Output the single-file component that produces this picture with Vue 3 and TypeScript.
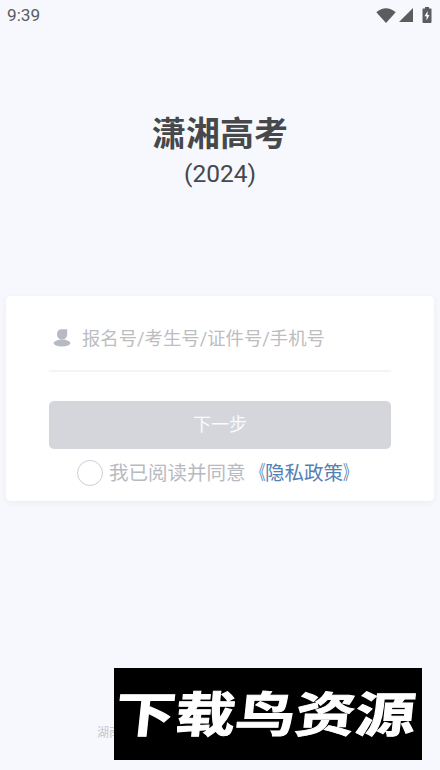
<script setup lang="ts">
import { ref } from 'vue'

const account = ref('')
const agreed = ref(false)
</script>

<template>
  <main class="screen">
    <header class="status">
      <span class="time">9:39</span>
      <div class="indicators">
        <svg class="wifi" viewBox="0 0 20 15"><path d="M.3 4.2Q10-3.8 19.7 4.2L10 15Z" /></svg>
        <svg class="signal" viewBox="0 0 14 14"><path d="M14 0V14H0Z" /></svg>
        <svg class="battery" viewBox="0 0 10 16">
          <path d="M3 0H7V1.5H9Q9.5 1.5 9.5 2.5V15Q9.5 16 8.5 16H1.5Q.5 16 .5 15V2.5Q.5 1.5 1 1.5H3Z" />
          <path class="bolt" d="M5.6 4L2.5 9.3H4.5V13.5L7.5 8H5.6Z" />
        </svg>
      </div>
    </header>

    <div class="heading">
      <h1>潇湘高考</h1>
      <p>(2024)</p>
    </div>

    <section class="card">
      <label class="field">
        <svg class="user" viewBox="0 0 18 18">
          <path d="M4 5.3Q4 .3 9 .3H14.2V5.3C14.2 8.5 12 10.6 9.1 10.6S4 8.5 4 5.3Z" />
          <ellipse cx="9" cy="14.1" rx="8.5" ry="3.5" />
        </svg>
        <input v-model="account" type="text" placeholder="报名号/考生号/证件号/手机号" />
      </label>
      <button class="next" type="button">下一步</button>
      <div class="agreement">
        <button class="radio" :class="{ checked: agreed }" type="button" @click="agreed = !agreed"></button>
        <span>我已阅读并同意</span><a><span class="open">《</span>隐私政策<span class="close">》</span></a>
      </div>
    </section>

    <footer class="owner">湖南</footer>
    <div class="banner"><span>下载鸟资源</span></div>
  </main>
</template>

<style>
body {
  background: #f6f8fd;
}
</style>

<style scoped>
* {
  box-sizing: border-box;
}
.screen {
  position: relative;
  display: flex;
  flex-direction: column;
  width: 440px;
  height: 770px;
  overflow: hidden;
  background: #f6f8fd;
  font-family: Roboto, "Noto Sans CJK SC", sans-serif;
}
.status {
  display: flex;
  align-items: center;
  justify-content: space-between;
  height: 30px;
  padding: 0 8px 0 7px;
}
.time {
  color: #5b5c5f;
  font-size: 17.2px;
  line-height: 30px;
}
.indicators {
  display: flex;
  align-items: center;
  height: 28px;
}
.indicators svg {
  fill: #5c5c5e;
}
.wifi {
  width: 20px;
  height: 15px;
}
.signal {
  width: 14px;
  height: 14px;
  margin-left: 3px;
}
.battery {
  width: 10px;
  height: 16px;
  margin-left: 9px;
}
.indicators .bolt {
  fill: #f6f8fd;
}
.heading {
  height: 266px;
  padding-top: 79px;
  color: #474849;
  text-align: center;
}
.heading h1 {
  margin: 0;
  font-size: 34px;
  font-weight: 700;
  line-height: 51px;
}
.heading p {
  margin: 0;
  font-size: 24.5px;
  line-height: 28px;
}
.card {
  height: 204.5px;
  margin: 0 6px;
  padding: 0 43px;
  border-radius: 5px;
  background: #fff;
  box-shadow: 0 2px 6px rgba(60, 70, 90, 0.06);
}
.field {
  display: flex;
  align-items: center;
  height: 76px;
  padding: 10px 0 0 4px;
  border-bottom: 2px solid #f3f4f6;
}
.user {
  flex: none;
  width: 18px;
  height: 18px;
  fill: #b7bac3;
}
.field input {
  flex: 1;
  min-width: 0;
  margin-left: 11px;
  padding: 2px 0 0;
  border: 0;
  outline: 0;
  background: transparent;
  color: #555;
  font-family: inherit;
  font-size: 18.35px;
  line-height: 28px;
}
.field input::placeholder {
  color: #bdbdbf;
  opacity: 1;
}
.next {
  display: block;
  width: 342px;
  height: 48px;
  margin-top: 29px;
  padding: 0 0 5px;
  border: 0;
  border-radius: 5px;
  background: #d4d6dc;
  color: #fbfbfc;
  font-family: inherit;
  font-size: 18px;
}
.agreement {
  display: flex;
  align-items: center;
  height: 48px;
  padding-left: 28px;
  color: #b8bac1;
  font-size: 19.5px;
  line-height: 30px;
  white-space: nowrap;
}
.agreement > span,
.agreement a {
  padding-top: 2px;
}
.radio {
  width: 26px;
  height: 26px;
  margin-right: 6px;
  padding: 0;
  border: 1.5px solid #cdced1;
  border-radius: 50%;
  background: #fff;
}
.radio.checked {
  background: #5480b2;
}
.agreement a {
  color: #5480b2;
}
.open,
.close {
  display: inline-block;
  transform: scaleX(0.68);
}
.open {
  transform-origin: right;
}
.close {
  transform-origin: left;
}
.owner {
  margin: 222px 0 0 97px;
  color: #c4c6cc;
  font-size: 12px;
  line-height: 20px;
}
.banner {
  position: absolute;
  top: 668px;
  left: 114px;
  display: flex;
  align-items: center;
  justify-content: center;
  width: 308px;
  height: 92px;
  padding: 0 3px 6px 0;
  background: #000;
}
.banner span {
  color: #fff;
  font-family: "Noto Sans CJK SC", sans-serif;
  font-size: 48px;
  font-weight: 700;
  line-height: 86px;
  white-space: nowrap;
  transform: skewX(-6deg) scaleX(1.25);
  -webkit-text-stroke: 1px #fff;
}
</style>
